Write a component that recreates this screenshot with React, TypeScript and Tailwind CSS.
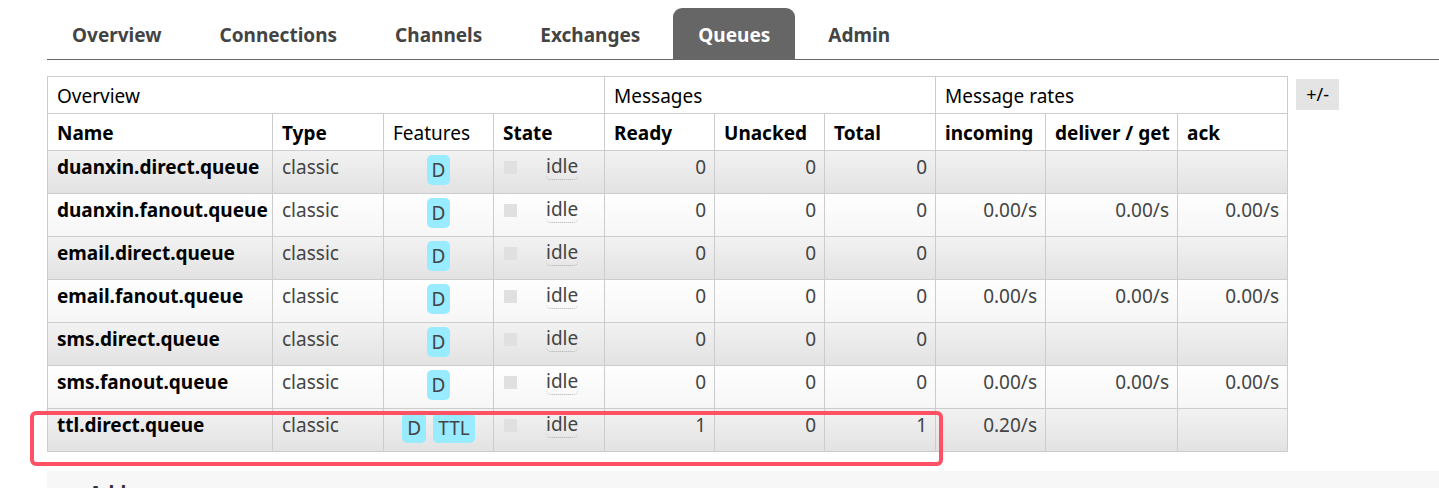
import React from "react";

type Row = {
  name: string;
  features: string[];
  ready: string;
  unacked: string;
  total: string;
  rates: [string, string, string];
};

const rows: Row[] = [
  { name: "duanxin.direct.queue", features: ["D"], ready: "0", unacked: "0", total: "0", rates: ["", "", ""] },
  { name: "duanxin.fanout.queue", features: ["D"], ready: "0", unacked: "0", total: "0", rates: ["0.00/s", "0.00/s", "0.00/s"] },
  { name: "email.direct.queue", features: ["D"], ready: "0", unacked: "0", total: "0", rates: ["", "", ""] },
  { name: "email.fanout.queue", features: ["D"], ready: "0", unacked: "0", total: "0", rates: ["0.00/s", "0.00/s", "0.00/s"] },
  { name: "sms.direct.queue", features: ["D"], ready: "0", unacked: "0", total: "0", rates: ["", "", ""] },
  { name: "sms.fanout.queue", features: ["D"], ready: "0", unacked: "0", total: "0", rates: ["0.00/s", "0.00/s", "0.00/s"] },
  { name: "ttl.direct.queue", features: ["D", "TTL"], ready: "1", unacked: "0", total: "1", rates: ["0.20/s", "", ""] },
];

const tabs = ["Overview", "Connections", "Channels", "Exchanges", "Queues", "Admin"];

const colWidths = [225, 111, 110, 111, 110, 110, 111, 110, 132, 110];

export default function App() {
  return (
    <div
      className="relative w-[1439px] h-[488px] overflow-hidden bg-white text-[19px] text-black"
      style={{ fontFamily: '"Noto Sans", "Open Sans", "Noto Sans CJK SC", sans-serif' }}
    >
      {/* Tabs */}
      <div className="pl-[47px] pt-[8px]">
        <div className="flex gap-[8px] border-b border-[#666]">
          {tabs.map((t) =>
            t === "Queues" ? (
              <div
                key={t}
                className="h-[51px] px-[25px] pt-[3px] flex items-center justify-center rounded-t-[9px] bg-[#666] text-white font-bold"
              >
                {t}
              </div>
            ) : (
              <div
                key={t}
                className="h-[51px] px-[25px] pt-[3px] flex items-center justify-center text-[#444] font-bold"
              >
                {t}
              </div>
            )
          )}
        </div>
      </div>

      {/* Table + toggle */}
      <div className="pl-[47px] mt-[16px] flex items-start gap-[8px]">
        <table className="border-collapse table-fixed w-[1241px]">
          <colgroup>
            {colWidths.map((w, i) => (
              <col key={i} style={{ width: w }} />
            ))}
          </colgroup>
          <thead>
            <tr className="h-[37px]">
              <th colSpan={4} className="border border-[#ccc] text-left font-normal pl-[9px] pt-[2px] align-middle">
                Overview
              </th>
              <th colSpan={3} className="border border-[#ccc] text-left font-normal pl-[9px] pt-[2px] align-middle">
                Messages
              </th>
              <th colSpan={3} className="border border-[#ccc] text-left font-normal pl-[9px] pt-[2px] align-middle">
                Message rates
              </th>
            </tr>
            <tr className="h-[37px]">
              <th className="border border-[#ccc] text-left font-bold pl-[9px] pt-[2px]">Name</th>
              <th className="border border-[#ccc] text-left font-bold pl-[9px] pt-[2px]">Type</th>
              <th className="border border-[#ccc] text-left font-normal pl-[9px] pt-[2px]">Features</th>
              <th className="border border-[#ccc] text-left font-bold pl-[9px] pt-[2px]">State</th>
              <th className="border border-[#ccc] text-left font-bold pl-[9px] pt-[2px]">Ready</th>
              <th className="border border-[#ccc] text-left font-bold pl-[9px] pt-[2px]">Unacked</th>
              <th className="border border-[#ccc] text-left font-bold pl-[9px] pt-[2px]">Total</th>
              <th className="border border-[#ccc] text-left font-bold pl-[9px] pt-[2px]">incoming</th>
              <th className="border border-[#ccc] text-left font-bold pl-[9px] pt-[2px]">deliver / get</th>
              <th className="border border-[#ccc] text-left font-bold pl-[9px] pt-[2px]">ack</th>
            </tr>
          </thead>
          <tbody>
            {rows.map((r, i) => {
              const odd = i % 2 === 0;
              const bg = odd
                ? "bg-gradient-to-b from-[#f2f2f2] to-[#e2e2e2]"
                : "bg-gradient-to-b from-[#fefefe] to-[#f6f6f6]";
              const td = "border border-[#ccc] align-top pt-[2px] h-[43px] whitespace-nowrap";
              return (
                <tr key={r.name} className={bg}>
                  <td className={`${td} pl-[9px] font-bold`}>{r.name}</td>
                  <td className={`${td} pl-[9px] text-[#444]`}>classic</td>
                  <td className={`${td} text-center`}>
                    <div className="flex justify-center gap-[7px] pt-[2px]">
                      {r.features.map((f) => (
                        <span
                          key={f}
                          className="inline-flex items-center justify-center h-[30px] px-[5px] rounded-[5px] bg-[#99ebff] text-[#444]"
                        >
                          {f}
                        </span>
                      ))}
                    </div>
                  </td>
                  <td className={`${td} pl-[10px] text-[#444]`}>
                    <div className="flex items-start">
                      <span className="mt-[8px] w-[13px] h-[13px] bg-[#e0e0e0] inline-block" />
                      <span className="ml-[29px] border-b border-dotted border-[#aaa] rounded-[5px] leading-[26px]">
                        idle
                      </span>
                    </div>
                  </td>
                  <td className={`${td} text-right pr-[8px] text-[#444]`}>{r.ready}</td>
                  <td className={`${td} text-right pr-[8px] text-[#444]`}>{r.unacked}</td>
                  <td className={`${td} text-right pr-[8px] text-[#444]`}>{r.total}</td>
                  {r.rates.map((v, j) => (
                    <td key={j} className={`${td} text-right pr-[8px] text-[#444]`}>
                      {v}
                    </td>
                  ))}
                </tr>
              );
            })}
          </tbody>
        </table>
        <button className="mt-[3px] w-[43px] h-[31px] bg-[#e4e4e4] text-[18px] text-black flex items-center justify-center">
          +/-
        </button>
      </div>

      {/* Add section (cut off) */}
      <div className="ml-[47px] mt-[19px] bg-[#f7f7f7] h-[60px] pl-[10px] pt-[8px] flex items-start gap-[16px]">
        <span className="mt-[12px] w-[16px] h-[2px] bg-[#888] inline-block" />
        <span className="font-bold text-[#333]">Add a new queue</span>
      </div>

      {/* Red highlight annotation */}
      <div className="absolute left-[30px] top-[411px] w-[913px] h-[55px] border-[4px] border-[#ff5064] rounded-[6px] pointer-events-none" />
    </div>
  );
}
